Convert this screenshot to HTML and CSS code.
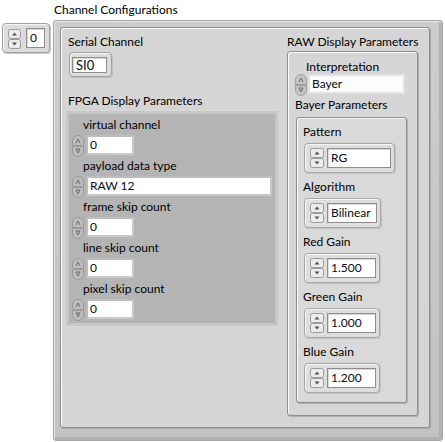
FILE: index.html
```html
<!DOCTYPE html>
<html>
<head>
<meta charset="utf-8">
<title>Channel Configurations</title>
<link rel="stylesheet" href="styles.css">
</head>
<body>
<div class="panel">
  <div class="index-ctl">
    <svg class="sbtns" width="13" height="20" viewBox="0 0 13 20"><rect x="0.5" y="0.5" width="12" height="9" rx="2" fill="#ececec" stroke="#9a9a9a"/><rect x="0.5" y="10.5" width="12" height="9" rx="2" fill="#ececec" stroke="#9a9a9a"/><path d="M4 6.5 L6.5 3.5 L9 6.5 Z" fill="#555"/><path d="M4 13.5 L6.5 16.5 L9 13.5 Z" fill="#555"/></svg>
    <div class="sfield idx-field">0</div>
  </div>
  <div class="array">
    <div class="label arr-label">Channel Configurations</div>
    <div class="array-frame">
      <div class="cluster">
        <div class="col-left">
          <div class="label lbl-left">Serial Channel</div>
          <div class="si-box"><div class="sfield si-field">SI0</div></div>
          <div class="label lbl-left fpga-label">FPGA Display Parameters</div>
          <div class="fpga">
            <div class="fitem">
              <div class="label flabel">virtual channel</div>
              <div class="frow">
                <svg class="marrows" width="12" height="22" viewBox="0 0 12 22"><path d="M0.5 10.5 V6 A5.5 5.5 0 0 1 11.5 6 V10.5 Z" fill="#bdbdbd" stroke="#9a9a9a"/><path d="M0.5 11.5 V16 A5.5 5.5 0 0 0 11.5 16 V11.5 Z" fill="#bdbdbd" stroke="#9a9a9a"/><path d="M4 8 L6 4 L8 8" fill="none" stroke="#6a6a6a"/><path d="M4 14 L6 18 L8 14 Z" fill="none" stroke="#6a6a6a"/></svg>
                <div class="mfield num">0</div>
              </div>
            </div>
            <div class="fitem">
              <div class="label flabel">payload data type</div>
              <div class="frow">
                <svg class="marrows" width="12" height="22" viewBox="0 0 12 22"><path d="M0.5 10.5 V6 A5.5 5.5 0 0 1 11.5 6 V10.5 Z" fill="#bdbdbd" stroke="#9a9a9a"/><path d="M0.5 11.5 V16 A5.5 5.5 0 0 0 11.5 16 V11.5 Z" fill="#bdbdbd" stroke="#9a9a9a"/><path d="M4 8 L6 4 L8 8" fill="none" stroke="#6a6a6a"/><path d="M4 14 L6 18 L8 14 Z" fill="none" stroke="#6a6a6a"/></svg>
                <div class="mfield wide">RAW 12</div>
              </div>
            </div>
            <div class="fitem">
              <div class="label flabel">frame skip count</div>
              <div class="frow">
                <svg class="marrows" width="12" height="22" viewBox="0 0 12 22"><path d="M0.5 10.5 V6 A5.5 5.5 0 0 1 11.5 6 V10.5 Z" fill="#bdbdbd" stroke="#9a9a9a"/><path d="M0.5 11.5 V16 A5.5 5.5 0 0 0 11.5 16 V11.5 Z" fill="#bdbdbd" stroke="#9a9a9a"/><path d="M4 8 L6 4 L8 8" fill="none" stroke="#6a6a6a"/><path d="M4 14 L6 18 L8 14 Z" fill="none" stroke="#6a6a6a"/></svg>
                <div class="mfield num">0</div>
              </div>
            </div>
            <div class="fitem">
              <div class="label flabel">line skip count</div>
              <div class="frow">
                <svg class="marrows" width="12" height="22" viewBox="0 0 12 22"><path d="M0.5 10.5 V6 A5.5 5.5 0 0 1 11.5 6 V10.5 Z" fill="#bdbdbd" stroke="#9a9a9a"/><path d="M0.5 11.5 V16 A5.5 5.5 0 0 0 11.5 16 V11.5 Z" fill="#bdbdbd" stroke="#9a9a9a"/><path d="M4 8 L6 4 L8 8" fill="none" stroke="#6a6a6a"/><path d="M4 14 L6 18 L8 14 Z" fill="none" stroke="#6a6a6a"/></svg>
                <div class="mfield num">0</div>
              </div>
            </div>
            <div class="fitem">
              <div class="label flabel">pixel skip count</div>
              <div class="frow">
                <svg class="marrows" width="12" height="22" viewBox="0 0 12 22"><path d="M0.5 10.5 V6 A5.5 5.5 0 0 1 11.5 6 V10.5 Z" fill="#bdbdbd" stroke="#9a9a9a"/><path d="M0.5 11.5 V16 A5.5 5.5 0 0 0 11.5 16 V11.5 Z" fill="#bdbdbd" stroke="#9a9a9a"/><path d="M4 8 L6 4 L8 8" fill="none" stroke="#6a6a6a"/><path d="M4 14 L6 18 L8 14 Z" fill="none" stroke="#6a6a6a"/></svg>
                <div class="mfield num">0</div>
              </div>
            </div>
          </div>
        </div>
        <div class="col-right">
          <div class="label">RAW Display Parameters</div>
          <div class="raw">
            <div class="label interp-label">Interpretation</div>
            <div class="interp-row">
              <svg class="marrows" width="12" height="22" viewBox="0 0 12 22"><path d="M0.5 10.5 V6 A5.5 5.5 0 0 1 11.5 6 V10.5 Z" fill="#c4c4c4" stroke="#a0a0a0"/><path d="M0.5 11.5 V16 A5.5 5.5 0 0 0 11.5 16 V11.5 Z" fill="#c4c4c4" stroke="#a0a0a0"/><path d="M4 8 L6 4 L8 8" fill="none" stroke="#6a6a6a"/><path d="M4 14 L6 18 L8 14 Z" fill="none" stroke="#6a6a6a"/></svg>
              <div class="mfield interp-field">Bayer</div>
            </div>
            <div class="label bayer-label">Bayer Parameters</div>
            <div class="bayer">
              <div class="label">Pattern</div>
              <div class="sbox w-pattern">
                <svg class="sbtns" width="14" height="20" viewBox="0 0 14 20"><rect x="0.5" y="0.5" width="13" height="9" rx="2" fill="#ececec" stroke="#9a9a9a"/><rect x="0.5" y="10.5" width="13" height="9" rx="2" fill="#ececec" stroke="#9a9a9a"/><path d="M4.5 6.5 L7 3.5 L9.5 6.5 Z" fill="#555"/><path d="M4.5 13.5 L7 16.5 L9.5 13.5 Z" fill="#555"/></svg>
                <div class="sfield">RG</div>
              </div>
              <div class="label">Algorithm</div>
              <div class="sbox w-algo">
                <svg class="sbtns" width="14" height="20" viewBox="0 0 14 20"><rect x="0.5" y="0.5" width="13" height="9" rx="2" fill="#ececec" stroke="#9a9a9a"/><rect x="0.5" y="10.5" width="13" height="9" rx="2" fill="#ececec" stroke="#9a9a9a"/><path d="M4.5 6.5 L7 3.5 L9.5 6.5 Z" fill="#555"/><path d="M4.5 13.5 L7 16.5 L9.5 13.5 Z" fill="#555"/></svg>
                <div class="sfield">Bilinear</div>
              </div>
              <div class="label">Red Gain</div>
              <div class="sbox w-gain">
                <svg class="sbtns" width="14" height="20" viewBox="0 0 14 20"><rect x="0.5" y="0.5" width="13" height="9" rx="2" fill="#ececec" stroke="#9a9a9a"/><rect x="0.5" y="10.5" width="13" height="9" rx="2" fill="#ececec" stroke="#9a9a9a"/><path d="M4.5 6.5 L7 3.5 L9.5 6.5 Z" fill="#555"/><path d="M4.5 13.5 L7 16.5 L9.5 13.5 Z" fill="#555"/></svg>
                <div class="sfield">1.500</div>
              </div>
              <div class="label">Green Gain</div>
              <div class="sbox w-gain">
                <svg class="sbtns" width="14" height="20" viewBox="0 0 14 20"><rect x="0.5" y="0.5" width="13" height="9" rx="2" fill="#ececec" stroke="#9a9a9a"/><rect x="0.5" y="10.5" width="13" height="9" rx="2" fill="#ececec" stroke="#9a9a9a"/><path d="M4.5 6.5 L7 3.5 L9.5 6.5 Z" fill="#555"/><path d="M4.5 13.5 L7 16.5 L9.5 13.5 Z" fill="#555"/></svg>
                <div class="sfield">1.000</div>
              </div>
              <div class="label">Blue Gain</div>
              <div class="sbox w-gain">
                <svg class="sbtns" width="14" height="20" viewBox="0 0 14 20"><rect x="0.5" y="0.5" width="13" height="9" rx="2" fill="#ececec" stroke="#9a9a9a"/><rect x="0.5" y="10.5" width="13" height="9" rx="2" fill="#ececec" stroke="#9a9a9a"/><path d="M4.5 6.5 L7 3.5 L9.5 6.5 Z" fill="#555"/><path d="M4.5 13.5 L7 16.5 L9.5 13.5 Z" fill="#555"/></svg>
                <div class="sfield">1.200</div>
              </div>
            </div>
          </div>
        </div>
      </div>
    </div>
  </div>
</div>
</body>
</html>
```

FILE: styles.css
```css
* { box-sizing: border-box; }
html, body { margin: 0; padding: 0; background: #ffffff; }
body {
  font-family: Lato, "Open Sans", sans-serif;
  font-size: 12px;
  color: #000;
  width: 445px;
  height: 442px;
  overflow: hidden;
}
.panel {
  display: flex;
  align-items: flex-start;
  padding: 1px 0 0 2px;
}
.label {
  line-height: 16px;
  height: 16px;
  padding-top: 1px;
  white-space: nowrap;
}

/* array index control */
.index-ctl {
  margin-top: 22px;
  width: 48px;
  height: 30px;
  display: flex;
  align-items: flex-start;
  padding: 4px 4px 0 5px;
  background: #dcdcdc;
  border: 1px solid #a2a2a2;
  border-radius: 4px;
  box-shadow: inset 1px 1px 0 #f4f4f4, 1px 1px 0 #c8c8c8;
}
.sbtns { display: block; flex: none; }
.index-ctl .sbtns { margin-top: 1px; }
.sfield {
  background: #fff;
  border: 1px solid #8e8e8e;
  box-shadow: inset 1px 1px 0 #dadada;
  height: 20px;
  line-height: 18px;
  padding-left: 3px;
  white-space: nowrap;
  color: #0a0a20;
}
.idx-field { width: 20px; margin-left: 5px; padding-left: 3px; }

/* array */
.array { margin-left: 3px; }
.arr-label { margin-left: 1px; }
.array-frame {
  margin-top: 3px;
  width: 390px;
  height: 421px;
  border: 1px solid #a4a4a4;
  border-radius: 3px;
  background: linear-gradient(#cdcdcd, #c2c2c2);
  box-shadow: inset 1px 1px 0 #e6e6e6, inset -3px -3px 0 #b2b2b2;
  padding: 6px 12px 11px 6px;
}
.cluster {
  width: 370px;
  height: 401px;
  border: 1px solid #8e8e8e;
  border-radius: 3px;
  background: #d5d5d5;
  box-shadow: inset 1px 1px 0 #fbfbfb, 1px 1px 0 #a8a8a8;
  padding: 5px 0 0 5px;
  display: flex;
  align-items: flex-start;
}
.col-left { width: 212px; }
.col-right { width: 131px; margin-left: 9px; }
.lbl-left { margin-left: 2px; }

.si-box {
  margin: 3px 0 0 3px;
  width: 43px;
  height: 25px;
  padding: 4px 0 0 2px;
  background: #dcdcdc;
  border: 1px solid #a2a2a2;
  border-radius: 4px;
  box-shadow: inset 1px 1px 0 #f4f4f4, 1px 1px 0 #bdbdbd;
}
.si-field { width: 35px; height: 16px; line-height: 14px; padding-left: 3px; font-size: 13px; }
.fpga-label { margin-top: 15px; }

/* FPGA cluster */
.fpga {
  margin-top: 3px;
  width: 212px;
  height: 215px;
  background: #b4b4b4;
  border: 3px solid #c7c7c7;
  border-radius: 2px;
  box-shadow: 0 0 0 1px #d9d9d9;
  padding-top: 2px;
}
.flabel { margin-left: 14px; }
.frow {
  margin-top: 3px;
  display: flex;
  align-items: flex-start;
  padding-left: 3px;
}
.marrows { display: block; flex: none; }
.mfield {
  margin-left: 2px;
  height: 20px;
  background: #fff;
  border: 2px solid #c9c9c9;
  border-top-color: #bdbdbd;
  border-left-color: #bdbdbd;
  line-height: 16px;
  padding-left: 2px;
  white-space: nowrap;
  color: #0a0a20;
}
.mfield.num { width: 48px; }
.mfield.wide { width: 186px; }

/* RAW cluster */
.raw {
  margin-top: 2px;
  width: 131px;
  height: 365px;
  border: 1px solid #8e8e8e;
  border-radius: 3px;
  background: #d6d6d6;
  box-shadow: inset 1px 1px 0 #fbfbfb, 1px 1px 0 #b0b0b0;
  padding: 6px 0 0 0;
}
.interp-label { margin-left: 18px; }
.interp-row {
  display: flex;
  align-items: flex-start;
  padding-left: 7px;
}
.interp-field {
  width: 97px;
  margin-left: 1px;
  border-color: #e2e2e2;
  background: #fcfcfc;
}
.bayer-label { margin-left: 7px; }
.bayer {
  margin: 5px 0 0 8px;
  width: 111px;
  height: 286px;
  border: 1px solid #8e8e8e;
  border-radius: 3px;
  background: #d9d9d9;
  box-shadow: inset 1px 1px 0 #fbfbfb, 1px 1px 0 #b0b0b0;
  padding: 5px 0 0 6px;
}
.sbox {
  margin: 4px 0 5px 1px;
  height: 30px;
  display: flex;
  align-items: flex-start;
  padding: 4px 0 0 5px;
  background: #dedede;
  border: 1px solid #a6a6a6;
  border-radius: 4px;
  box-shadow: inset 1px 1px 0 #f6f6f6, 1px 1px 0 #c4c4c4;
}
.sbox .sfield { margin-left: 3px; }
.w-pattern { width: 91px; }
.w-pattern .sfield { width: 64px; }
.w-algo { width: 77px; }
.w-algo .sfield { width: 50px; }
.w-gain { width: 76px; }
.w-gain .sfield { width: 49px; }
```
